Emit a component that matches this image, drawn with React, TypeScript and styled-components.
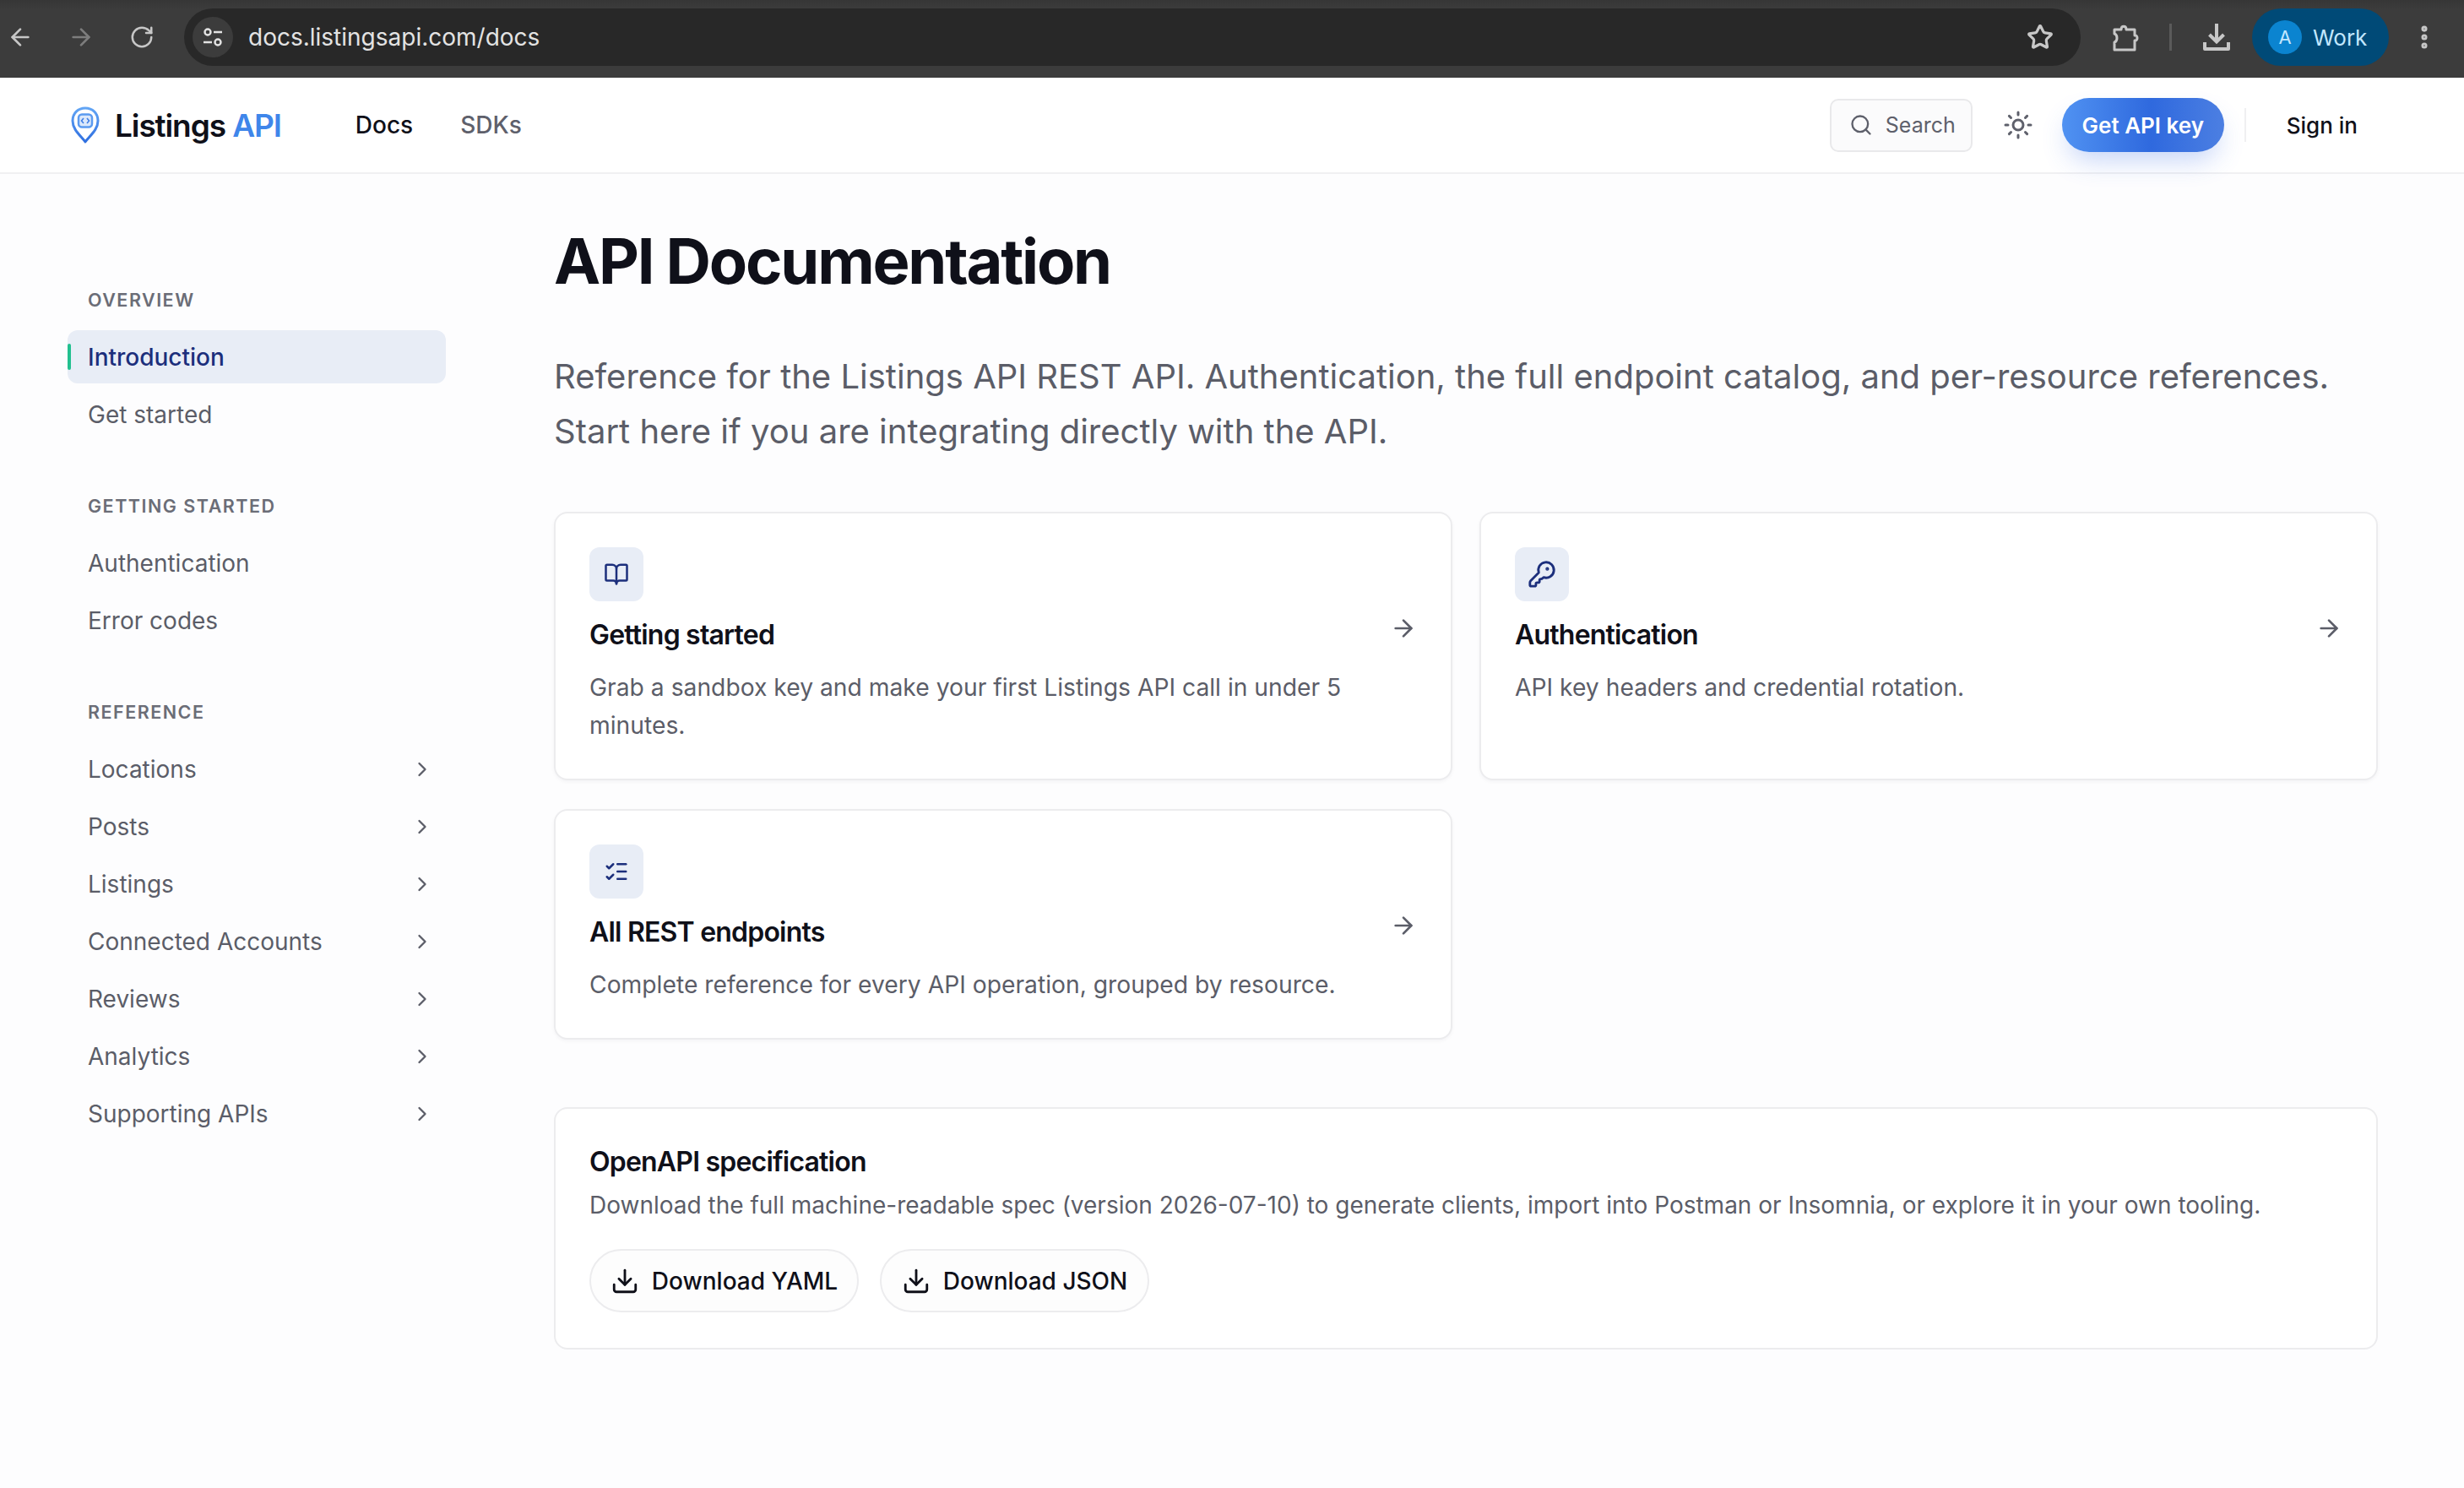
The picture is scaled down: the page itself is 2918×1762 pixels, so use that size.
import { createGlobalStyle, styled } from "styled-components";
import {
  ArrowLeft,
  ArrowRight,
  BookOpen,
  ChevronRight,
  Download,
  EllipsisVertical,
  KeyRound,
  ListChecks,
  RotateCw,
  Search,
  Star,
  Sun,
} from "lucide-react";

const GlobalStyle = createGlobalStyle`
  html, body {
    margin: 0;
    padding: 0;
    background: #fdfdfe;
    font-family: Inter, "Liberation Sans", sans-serif;
    overflow: hidden;
  }
  * { box-sizing: border-box; }
`;

const Page = styled.div`
  min-height: 100vh;
  display: flex;
  flex-direction: column;
`;

/* browser chrome */
const ChromeBar = styled.div`
  height: 92px;
  background: linear-gradient(#363636, #3c3c3c 12px);
  display: flex;
  align-items: center;
  padding: 0 0 4px 8px;
  color: #c7c7c7;
`;

const ChromeBtn = styled.div<{ $dim?: boolean }>`
  width: 32px;
  height: 32px;
  margin-right: 40px;
  display: flex;
  align-items: center;
  justify-content: center;
  color: ${(p) => (p.$dim ? "#7d7d7d" : "#c7c7c7")};
`;

const AddressBar = styled.div`
  width: 2246px;
  height: 68px;
  margin-left: -6px;
  border-radius: 34px;
  background: #282828;
  display: flex;
  align-items: center;
  padding: 0 32px 0 10px;
`;

const TuneBadge = styled.div`
  width: 48px;
  height: 48px;
  border-radius: 50%;
  background: #3c3c3c;
  display: flex;
  align-items: center;
  justify-content: center;
  color: #e3e3e3;
`;

const Url = styled.span`
  margin-left: 18px;
  flex: 1;
  font-size: 28px;
  color: #e3e3e3;
`;

const ChromeTools = styled.div`
  display: flex;
  align-items: center;
  margin-left: 36px;
`;

const ChromeSep = styled.div`
  width: 3px;
  height: 32px;
  background: #5a5a5a;
  margin: 0 36px 0 35px;
`;

const ProfilePill = styled.div`
  width: 162px;
  height: 68px;
  margin-left: 25px;
  border-radius: 34px;
  background: #004a77;
  display: flex;
  align-items: center;
  padding-left: 19px;
  color: #c2e7ff;
  font-size: 26px;
`;

const Avatar = styled.div`
  width: 40px;
  height: 40px;
  margin-right: 13px;
  border-radius: 50%;
  background: #0b84d0;
  display: flex;
  align-items: center;
  justify-content: center;
  font-size: 22px;
`;

const MenuDots = styled.div`
  margin-left: 25px;
  display: flex;
  color: #c7c7c7;
`;

/* site header */
const Header = styled.header`
  height: 114px;
  background: #fff;
  border-bottom: 2px solid #f0f0f2;
  display: flex;
  align-items: center;
  padding: 0 126px 0 84px;
`;

const Brand = styled.div`
  display: flex;
  align-items: center;
  gap: 18px;
  font-size: 37px;
  font-weight: 600;
  letter-spacing: -0.03em;
  color: #0f1019;
  margin-right: 88px;

  & > span > span {
    color: #3f86ea;
  }
`;

const TopLink = styled.a<{ $active?: boolean }>`
  font-size: 28px;
  font-weight: 500;
  margin-right: 56px;
  color: ${(p) => (p.$active ? "#0f1019" : "#5e606b")};
`;

const HeaderRight = styled.div`
  margin-left: auto;
  display: flex;
  align-items: center;
`;

const SearchBox = styled.div`
  width: 169px;
  height: 63px;
  border: 2px solid #e9e9eb;
  border-radius: 10px;
  background: #fbfbfc;
  display: flex;
  align-items: center;
  gap: 15px;
  padding-left: 21px;
  font-size: 25px;
  color: #5e606b;
`;

const ThemeToggle = styled.div`
  width: 36px;
  margin: 0 34px 0 36px;
  display: flex;
  color: #5e606b;
`;

const KeyButton = styled.button`
  width: 192px;
  height: 64px;
  border: 0;
  border-radius: 32px;
  background: linear-gradient(90deg, #5092f2 0%, #2f69de 55%, #4c7fe2 100%);
  box-shadow: 0 16px 32px -8px rgba(60, 110, 230, 0.32);
  color: #fff;
  font: 600 26px Inter, sans-serif;
  padding: 0;
`;

const HeaderSep = styled.div`
  width: 2px;
  height: 40px;
  background: #efeff1;
  margin: 0 48px 0 24px;
`;

const SignIn = styled.a`
  font-size: 26px;
  font-weight: 500;
  color: #0f1019;
`;

/* body */
const Body = styled.div`
  flex: 1;
  display: grid;
  grid-template-columns: 528px 1fr;
`;

const Sidebar = styled.nav`
  padding: 134px 0 0 80px;
  display: flex;
  flex-direction: column;
  gap: 62px;
`;

const NavGroup = styled.div`
  display: flex;
  flex-direction: column;
  gap: 5px;
`;

const GroupLabel = styled.div`
  height: 30px;
  line-height: 30px;
  margin: 0 0 16px 24px;
  font-size: 21.500px;
  font-weight: 600;
  letter-spacing: 0.07em;
  color: #6b6d77;
`;

const NavItem = styled.a<{ $active?: boolean }>`
  position: relative;
  height: 63px;
  display: flex;
  align-items: center;
  justify-content: space-between;
  padding: 0 14px 0 24px;
  border-radius: 12px;
  font-size: 28px;
  font-weight: ${(p) => (p.$active ? 500 : 400)};
  color: ${(p) => (p.$active ? "#1c2f7c" : "#5b5d68")};
  background: ${(p) => (p.$active ? "#e8edf6" : "transparent")};

  ${(p) =>
    p.$active &&
    `&::before {
      content: "";
      position: absolute;
      left: 0;
      top: 16px;
      bottom: 16px;
      width: 4px;
      border-radius: 2px;
      background: #22c08f;
    }`}
`;

const Main = styled.main`
  padding: 49px 102px 0 128px;
`;

const Title = styled.h1`
  margin: 0;
  height: 108px;
  line-height: 108px;
  font-size: 74px;
  font-weight: 700;
  letter-spacing: -0.03em;
  color: #0f1019;
`;

const Lead = styled.p`
  margin: 50px 0 0;
  font-size: 40px;
  line-height: 65px;
  color: #5b5d68;
`;

const CardGrid = styled.div`
  margin-top: 63px;
  display: grid;
  grid-template-columns: 1fr 1fr;
  gap: 34px 32px;
`;

const Card = styled.a`
  display: block;
  min-height: 271px;
  padding: 40px;
  border: 2px solid #ececee;
  border-radius: 16px;
  background: #fff;
  box-shadow: 0 2px 4px rgba(20, 20, 40, 0.04);
`;

const IconBox = styled.div`
  width: 64px;
  height: 64px;
  border-radius: 12px;
  background: #e8edf6;
  color: #1c2f7c;
  display: flex;
  align-items: center;
  justify-content: center;
`;

const CardHead = styled.div`
  margin-top: 18px;
  display: flex;
  justify-content: space-between;
  align-items: flex-start;
`;

const CardTitle = styled.h3`
  margin: 0;
  font-size: 32px;
  line-height: 44px;
  font-weight: 600;
  letter-spacing: -0.025em;
  color: #0f1019;
`;

const CardArrow = styled.div`
  display: flex;
  margin-top: -2px;
  color: #5b5d68;
`;

const CardText = styled.p`
  margin: 18px 0 0;
  font-size: 28.250px;
  line-height: 45px;
  color: #5b5d68;
`;

const SpecPanel = styled.section`
  margin-top: 80px;
  height: 287px;
  padding: 40px;
  border: 2px solid #ececee;
  border-radius: 16px;
  background: #fff;
`;

const SpecTitle = styled.h3`
  margin: 0;
  font-size: 32px;
  line-height: 46px;
  font-weight: 600;
  letter-spacing: -0.025em;
  color: #0f1019;
`;

const SpecText = styled.p`
  margin: 6px 0 0;
  font-size: 28px;
  line-height: 44px;
  color: #5b5d68;
`;

const SpecActions = styled.div`
  margin-top: 30px;
  display: flex;
  gap: 25px;
`;

const GhostButton = styled.a`
  width: 319px;
  height: 75px;
  border: 2px solid #ececee;
  border-radius: 38px;
  background: #fdfdfd;
  display: flex;
  align-items: center;
  justify-content: center;
  gap: 15px;
  font-size: 28px;
  font-weight: 500;
  color: #0f1019;
`;

const PinLogo = () => (
  <svg width="34" height="44" viewBox="0 0 34 44" fill="none">
    <defs>
      <linearGradient id="pin" x1="0" y1="0" x2="0" y2="1">
        <stop offset="0" stopColor="#62a5f5" />
        <stop offset="1" stopColor="#2f6fe0" />
      </linearGradient>
    </defs>
    <path
      d="M17 42C12 35 2 28 2 17C2 8 8.500 2 17 2S32 8 32 17C32 28 22 35 17 42Z"
      stroke="url(#pin)"
      strokeWidth="3"
      strokeLinejoin="round"
    />
    <rect x="9" y="9.500" width="16" height="15" rx="4" fill="#dbe8fb" stroke="#5b9af0" strokeWidth="2.500" />
    <path d="M15 14L12.500 17L15 20M19 14L21.500 17L19 20" stroke="#3f7fe6" strokeWidth="1.600" />
  </svg>
);

const TuneIcon = () => (
  <svg width="28" height="28" viewBox="0 0 28 28" fill="none" stroke="currentColor" strokeWidth="2.400">
    <circle cx="8" cy="8" r="3.500" />
    <path d="M15 8H25M3 20H13" />
    <circle cx="20" cy="20" r="3.500" />
  </svg>
);

const PuzzleIcon = () => (
  <svg width="34" height="36" viewBox="0 0 34 36" fill="none" stroke="currentColor" strokeWidth="3" strokeLinejoin="round">
    <path d="M4 9H12C12 4 18 4 18 9H28V16C32 15 32 23 28 22V33H4V24C8 23 8 15 4 14Z" />
  </svg>
);

const ChromeDownload = () => (
  <svg width="34" height="34" viewBox="0 0 34 34" fill="none" stroke="currentColor" strokeWidth="4">
    <path d="M17 1V22M8.500 14L17 22.500L25.500 14" />
    <path d="M3 23V31H31V23" strokeLinejoin="round" />
  </svg>
);

const docCards = [
  {
    icon: <BookOpen size={30} strokeWidth={2} />,
    title: "Getting started",
    text: "Grab a sandbox key and make your first Listings API call in under 5 minutes.",
  },
  {
    icon: <KeyRound size={34} strokeWidth={2} />,
    title: "Authentication",
    text: "API key headers and credential rotation.",
  },
  {
    icon: <ListChecks size={30} strokeWidth={2} />,
    title: "All REST endpoints",
    text: "Complete reference for every API operation, grouped by resource.",
  },
];

const referenceItems = [
  "Locations",
  "Posts",
  "Listings",
  "Connected Accounts",
  "Reviews",
  "Analytics",
  "Supporting APIs",
];

const App = () => {
  return (
    <Page>
      <GlobalStyle />
      <ChromeBar>
        <ChromeBtn>
          <ArrowLeft size={32} strokeWidth={2} />
        </ChromeBtn>
        <ChromeBtn $dim>
          <ArrowRight size={32} strokeWidth={2} />
        </ChromeBtn>
        <ChromeBtn>
          <RotateCw size={30} strokeWidth={2} />
        </ChromeBtn>
        <AddressBar>
          <TuneBadge>
            <TuneIcon />
          </TuneBadge>
          <Url>docs.listingsapi.com/docs</Url>
          <Star size={32} strokeWidth={2.4} />
        </AddressBar>
        <ChromeTools>
          <PuzzleIcon />
          <ChromeSep />
          <ChromeDownload />
          <ProfilePill>
            <Avatar>A</Avatar>
            Work
          </ProfilePill>
          <MenuDots>
            <EllipsisVertical size={34} strokeWidth={3} />
          </MenuDots>
        </ChromeTools>
      </ChromeBar>

      <Header>
        <Brand>
          <PinLogo />
          <span>
            Listings <span>API</span>
          </span>
        </Brand>
        <TopLink $active>Docs</TopLink>
        <TopLink>SDKs</TopLink>
        <HeaderRight>
          <SearchBox>
            <Search size={28} strokeWidth={2} />
            Search
          </SearchBox>
          <ThemeToggle>
            <Sun size={36} strokeWidth={2} />
          </ThemeToggle>
          <KeyButton>Get API key</KeyButton>
          <HeaderSep />
          <SignIn>Sign in</SignIn>
        </HeaderRight>
      </Header>

      <Body>
        <Sidebar>
          <NavGroup>
            <GroupLabel>OVERVIEW</GroupLabel>
            <NavItem $active>Introduction</NavItem>
            <NavItem>Get started</NavItem>
          </NavGroup>
          <NavGroup>
            <GroupLabel>GETTING STARTED</GroupLabel>
            <NavItem>Authentication</NavItem>
            <NavItem>Error codes</NavItem>
          </NavGroup>
          <NavGroup>
            <GroupLabel>REFERENCE</GroupLabel>
            {referenceItems.map((item) => (
              <NavItem key={item}>
                {item}
                <ChevronRight size={28} strokeWidth={2} />
              </NavItem>
            ))}
          </NavGroup>
        </Sidebar>

        <Main>
          <Title>API Documentation</Title>
          <Lead>
            Reference for the Listings API REST API. Authentication, the full endpoint catalog, and
            per-resource references. Start here if you are integrating directly with the API.
          </Lead>
          <CardGrid>
            {docCards.map((card) => (
              <Card key={card.title}>
                <IconBox>{card.icon}</IconBox>
                <CardHead>
                  <CardTitle>{card.title}</CardTitle>
                  <CardArrow>
                    <ArrowRight size={32} strokeWidth={2} />
                  </CardArrow>
                </CardHead>
                <CardText>{card.text}</CardText>
              </Card>
            ))}
          </CardGrid>
          <SpecPanel>
            <SpecTitle>OpenAPI specification</SpecTitle>
            <SpecText>
              Download the full machine-readable spec (version 2026-07-10) to generate clients, import
              into Postman or Insomnia, or explore it in your own tooling.
            </SpecText>
            <SpecActions>
              <GhostButton>
                <Download size={34} strokeWidth={2} />
                Download YAML
              </GhostButton>
              <GhostButton>
                <Download size={34} strokeWidth={2} />
                Download JSON
              </GhostButton>
            </SpecActions>
          </SpecPanel>
        </Main>
      </Body>
    </Page>
  );
};

export default App;
